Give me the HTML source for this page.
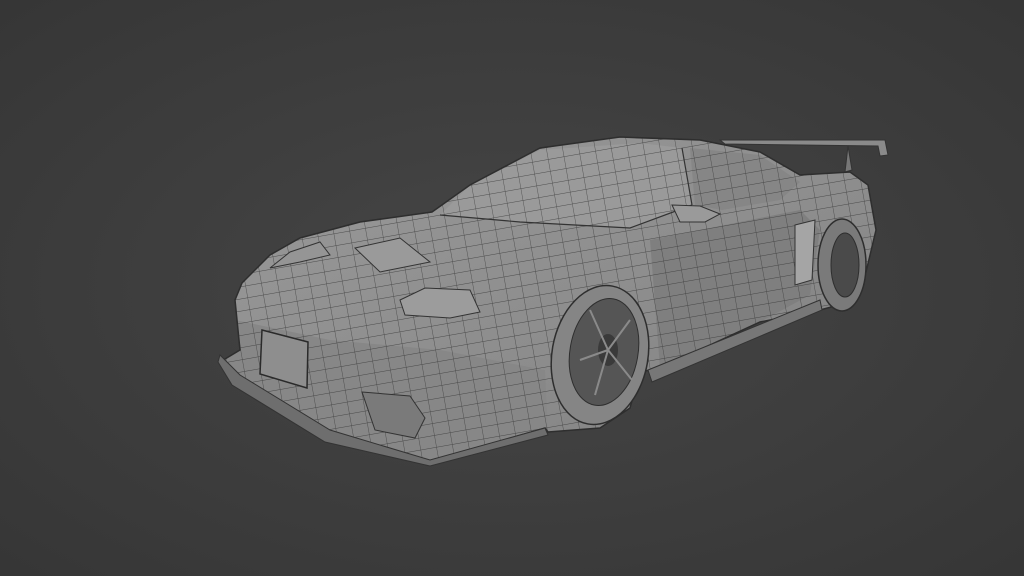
<!DOCTYPE html>
<html><head><style>
html,body{margin:0;padding:0;width:1024px;height:576px;overflow:hidden;background:#3d3d3d}
</style></head><body>
<svg width="1024" height="576" viewBox="0 0 1024 576" xmlns="http://www.w3.org/2000/svg">
<defs>
<radialGradient id="bg" cx="50%" cy="50%" r="70%">
<stop offset="0" stop-color="#464646"/><stop offset="1" stop-color="#363636"/>
</radialGradient>
<pattern id="grid" width="16" height="12" patternUnits="userSpaceOnUse" patternTransform="rotate(-10)">
<path d="M0 0H16M0 0V12" stroke="#333" stroke-width="0.9" fill="none" opacity="0.75"/>
</pattern>
<linearGradient id="body" x1="0" y1="0" x2="1" y2="1">
<stop offset="0" stop-color="#9a9a9a"/><stop offset="0.6" stop-color="#8c8c8c"/><stop offset="1" stop-color="#7a7a7a"/>
</linearGradient>
<clipPath id="carclip"><path id="carpath" d="M235 300 L242 283 L270 255 L300 238 L360 222 L432 212 L470 185 L540 148 L620 137 L700 140 L760 152 L800 175 L850 172 L868 185 L876 230 L866 272 L850 302 L820 310 L760 322 L660 368 L640 372 L630 408 L600 428 L548 432 L545 428 L430 462 L330 440 L250 395 L220 362 L240 350 Z"/></clipPath>
</defs>
<rect width="1024" height="576" fill="url(#bg)"/>
<path d="M720 140 L885 140 L888 155 L880 156 L878 146 L725 144 Z" fill="#8a8a8a" stroke="#333" stroke-width="1"/>
<path d="M848 146 L852 170 L845 172 Z" fill="#777" stroke="#333"/>
<g clip-path="url(#carclip)">
<rect x="200" y="120" width="700" height="360" fill="url(#body)"/>
<path d="M440 215 L470 185 L540 150 L640 143 L682 148 L692 205 L630 228 L520 222 Z" fill="#9a9a9a"/>
<path d="M690 148 L760 155 L800 182 L780 200 L722 210 L695 205 Z" fill="#868686"/>
<path d="M650 240 L800 210 L820 230 L810 295 L760 322 L660 368 Z" fill="#7f7f7f"/>
<path d="M235 320 L330 340 L440 350 L545 370 L548 432 L430 462 L330 440 L250 395 L220 362 Z" fill="#878787"/>
<rect x="200" y="120" width="700" height="360" fill="url(#grid)"/>
</g>
<use href="#carpath" fill="none" stroke="#2e2e2e" stroke-width="1.5"/>
<path d="M440 215 L520 222 L630 228 L692 205 M682 148 L692 205" fill="none" stroke="#333" stroke-width="1.2"/>
<path d="M355 248 L400 238 L430 262 L380 272 Z" fill="#9a9a9a" stroke="#333"/>
<path d="M400 300 L425 288 L470 290 L480 312 L450 318 L405 315 Z" fill="#9c9c9c" stroke="#333"/>
<path d="M270 268 L290 252 L320 242 L330 255 L300 262 Z" fill="#959595" stroke="#333"/>
<path d="M672 205 L700 206 L720 214 L705 222 L680 222 Z" fill="#9a9a9a" stroke="#333"/>
<path d="M262 330 L308 342 L307 388 L260 374 Z" fill="#8e8e8e" stroke="#2a2a2a" stroke-width="1.5"/>
<path d="M220 355 L240 375 L330 430 L430 460 L545 428 L548 435 L430 466 L325 442 L232 385 L218 362 Z" fill="#6e6e6e" stroke="#333"/>
<path d="M362 392 L410 396 L425 418 L415 438 L375 430 Z" fill="#7a7a7a" stroke="#333"/>
<ellipse cx="600" cy="355" rx="48" ry="70" transform="rotate(10 600 355)" fill="#858585" stroke="#2e2e2e" stroke-width="1.5"/>
<ellipse cx="604" cy="352" rx="34" ry="54" transform="rotate(10 604 352)" fill="#555" stroke="#2e2e2e"/>
<ellipse cx="608" cy="350" rx="10" ry="16" fill="#3a3a3a"/>
<g stroke="#8a8a8a" stroke-width="2"><path d="M608 350 L590 310 M608 350 L630 320 M608 350 L632 380 M608 350 L595 395 M608 350 L580 360"/></g>
<path d="M648 370 L820 300 L822 310 L652 382 Z" fill="#777" stroke="#333"/>
<ellipse cx="842" cy="265" rx="24" ry="46" fill="#7a7a7a" stroke="#2e2e2e" stroke-width="1.5"/>
<ellipse cx="845" cy="265" rx="14" ry="32" fill="#4a4a4a" stroke="#2e2e2e"/>
<path d="M795 225 L815 220 L812 280 L795 285 Z" fill="#a5a5a5" stroke="#333"/>
</svg>
</body></html>
